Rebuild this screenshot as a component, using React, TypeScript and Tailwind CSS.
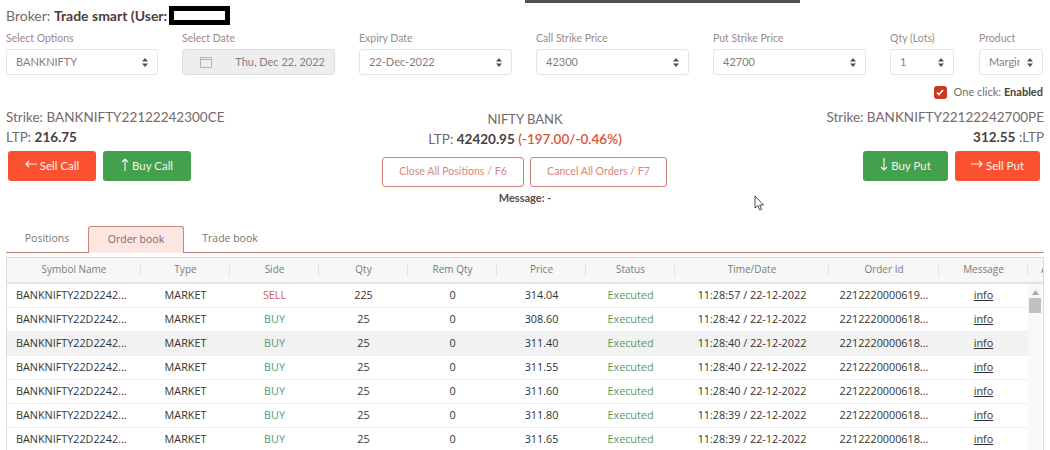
const font = { label: 'text-[10.5px] leading-[14px] text-[#9a8a8a]' };

const columns = [
  { name: 'Symbol Name', w: 'w-[134px]' },
  { name: 'Type', w: 'w-[89px]' },
  { name: 'Side', w: 'w-[89px]' },
  { name: 'Qty', w: 'w-[89px]' },
  { name: 'Rem Qty', w: 'w-[89px]' },
  { name: 'Price', w: 'w-[89px]' },
  { name: 'Status', w: 'w-[89px]' },
  { name: 'Time/Date', w: 'w-[154px]' },
  { name: 'Order Id', w: 'w-[110px]' },
  { name: 'Message', w: 'w-[89px]' },
];

const orders = [
  { side: 'SELL', qty: '225', price: '314.04', time: '11:28:57', id: '2212220000619...' },
  { side: 'BUY', qty: '25', price: '308.60', time: '11:28:42', id: '2212220000618...' },
  { side: 'BUY', qty: '25', price: '311.40', time: '11:28:40', id: '2212220000618...' },
  { side: 'BUY', qty: '25', price: '311.55', time: '11:28:40', id: '2212220000618...' },
  { side: 'BUY', qty: '25', price: '311.60', time: '11:28:40', id: '2212220000618...' },
  { side: 'BUY', qty: '25', price: '311.80', time: '11:28:39', id: '2212220000618...' },
  { side: 'BUY', qty: '25', price: '311.65', time: '11:28:39', id: '2212220000618...' },
];

function SortArrows() {
  return (
    <svg width="6" height="9" viewBox="0 0 6 9" className="shrink-0">
      <path d="M3 0 L6 3.6 H0 Z M0 5.4 H6 L3 9 Z" fill="#5a4a4a" />
    </svg>
  );
}

function Select({ label, value, w, ml = '' }: { label: string; value: string; w: string; ml?: string }) {
  return (
    <div className={`${w} ${ml} shrink-0`}>
      <div className={`${font.label} h-[18px]`}>{label}</div>
      <div className="flex h-[26px] items-center justify-between gap-[7px] overflow-hidden rounded-[3px] border border-[#e6e4e6] bg-white pl-[9px] pr-[9px] text-[11px] text-[#8d7b7b]">
        <span className="min-w-0 overflow-hidden whitespace-nowrap">{value}</span>
        <SortArrows />
      </div>
    </div>
  );
}

const arrows = {
  left: { w: 12, h: 8, d: 'M12 4H1M4 1L1 4L4 7' },
  right: { w: 12, h: 8, d: 'M0 4H11M8 1L11 4L8 7' },
  up: { w: 8, h: 13, d: 'M4 13V1M1 4L4 1L7 4' },
  down: { w: 8, h: 13, d: 'M4 0V12M1 9L4 12L7 9' },
};

function LongArrow({ dir }: { dir: 'left' | 'right' | 'up' | 'down' }) {
  const a = arrows[dir];
  return (
    <svg width={a.w} height={a.h} viewBox={`0 0 ${a.w} ${a.h}`} fill="none" stroke="#f4f4ee" strokeWidth="1.2" className="-mt-[4px] shrink-0">
      <path d={a.d} />
    </svg>
  );
}

function ActionButton({ label, bg, w, dir }: { label: string; bg: string; w: string; dir: 'left' | 'right' | 'up' | 'down' }) {
  return (
    <button className={`flex h-[30px] ${w} items-center justify-center gap-[3px] rounded-[3px] ${bg} text-[11.5px] text-[#f4f4ee]`}>
      <LongArrow dir={dir} />
      {label}
    </button>
  );
}

export default function App() {
  return (
    <div className="relative h-[450px] w-[1050px] overflow-hidden bg-white font-['Lato',sans-serif] text-[#756a6a]">
      <div className="absolute left-[525px] top-0 h-[3px] w-[275px] bg-[#50525a]" />

      <div className="flex h-[28px] items-center px-[6px] pt-[2px] text-[14px]">
        <span>Broker:&nbsp;</span>
        <span className="font-bold text-[#4d3d3d]">Trade smart (User:</span>
        <span className="ml-[2px] h-[19px] w-[61px] border-[5px] border-black bg-white" />
      </div>

      <div className="mt-[3px] flex gap-[24px] pl-[6px]">
        <Select label="Select Options" value="BANKNIFTY" w="w-[152px]" />
        <div className="w-[153px] shrink-0">
          <div className={`${font.label} h-[18px]`}>Select Date</div>
          <div className="flex h-[26px] items-center justify-between rounded-[3px] border border-[#dedde0] bg-[#eeeef0] pl-[17px] pr-[9px] text-[11px] text-[#8d7b7b]">
            <svg width="12" height="12" viewBox="0 0 12 12" fill="none" stroke="#b4b4b8" strokeWidth="1">
              <path d="M0.5 1.5H11.5V11.5H0.5ZM0.5 3.5H11.5" />
            </svg>
            <span>Thu, Dec 22, 2022</span>
          </div>
        </div>
        <Select label="Expiry Date" value="22-Dec-2022" w="w-[153px]" />
        <Select label="Call Strike Price" value="42300" w="w-[153px]" />
        <Select label="Put Strike Price" value="42700" w="w-[153px]" />
        <Select label="Qty (Lots)" value="1" w="w-[64px]" />
        <Select label="Product" value="Margin" w="w-[64px]" ml="ml-[1px]" />
      </div>

      <div className="mt-[9px] flex h-[16px] items-center justify-end gap-[7px] pr-[7px] text-[11px]">
        <span className="flex h-[13px] w-[13px] items-center justify-center rounded-[3px] bg-[#c9391f]">
          <svg width="8" height="7" viewBox="0 0 8 7" fill="none" stroke="white" strokeWidth="1.6">
            <path d="M1 3.5L3 5.5L7 1" />
          </svg>
        </span>
        <span>
          One click: <b className="text-[#4d3d3d]">Enabled</b>
        </span>
      </div>

      <div className="grid grid-cols-[1fr_auto_1fr] px-[6px]">
        <div>
          <div className="mt-[7px] h-[20px] text-[13.5px] leading-[20px]">Strike: BANKNIFTY22122242300CE</div>
          <div className="h-[21px] text-[13.5px] leading-[21px]">
            LTP: <b className="text-[#4d3d3d]">216.75</b>
          </div>
          <div className="mt-[3px] flex gap-[7px] pl-[2px]">
            <ActionButton label="Sell Call" bg="bg-[#fc5130]" w="w-[88px]" dir="left" />
            <ActionButton label="Buy Call" bg="bg-[#43a04d]" w="w-[88px]" dir="up" />
          </div>
        </div>

        <div className="flex flex-col items-center">
          <div className="mt-[9px] h-[20px] text-[13px] leading-[20px]">NIFTY BANK</div>
          <div className="h-[20px] whitespace-nowrap text-[13.5px] leading-[20px]">
            LTP: <b className="text-[#4d3d3d]">42420.95</b> <b className="font-semibold text-[#d9533a]">(-197.00/-0.46%)</b>
          </div>
          <div className="mr-[1px] mt-[8px] flex gap-[6px]">
            <button className="h-[30px] w-[142px] rounded-[3px] border border-[#d08276] text-[10.6px] text-[#d9867a]">Close All Positions / F6</button>
            <button className="h-[30px] w-[137px] rounded-[3px] border border-[#d08276] text-[10.6px] text-[#d9867a]">Cancel All Orders / F7</button>
          </div>
          <div className="mt-[3px] text-[11px] font-bold text-[#5a4c4c]">Message: -</div>
        </div>

        <div className="flex flex-col items-end">
          <div className="mt-[7px] h-[20px] text-[13.5px] leading-[20px]">Strike: BANKNIFTY22122242700PE</div>
          <div className="h-[21px] text-[13.5px] leading-[21px]">
            <b className="text-[#4d3d3d]">312.55</b> :LTP
          </div>
          <div className="mt-[3px] flex gap-[7px] pr-[4px]">
            <ActionButton label="Buy Put" bg="bg-[#43a04d]" w="w-[85px]" dir="down" />
            <ActionButton label="Sell Put" bg="bg-[#fc5130]" w="w-[85px]" dir="right" />
          </div>
        </div>
      </div>

      <svg width="12" height="17" viewBox="0 0 12 17" className="absolute left-[754px] top-[195px]">
        <path d="M1 1 V13 L3.8 10.6 L5.8 15 L7.6 14.2 L5.7 10 H9.5 Z" fill="white" stroke="#333" strokeWidth="0.9" />
      </svg>

      <div className="mx-[6px] mt-[19px] flex h-[27px] items-end border-b border-[#c8877c] font-['Open_Sans',sans-serif] text-[10.5px]">
        <div className="flex h-[26px] w-[82px] items-center justify-center text-[#7b7373]">Positions</div>
        <div className="-mb-px flex h-[27px] w-[96px] items-center justify-center rounded-t-[3px] border border-b-0 border-[#c8877c] bg-[#fde6e2] text-[#7b6868]">Order book</div>
        <div className="flex h-[26px] w-[92px] items-center justify-center text-[#7b7373]">Trade book</div>
      </div>

      <div className="mx-[6px] mt-[4px] border border-[#dcdcdc] font-['Open_Sans',sans-serif] text-[10.8px]">
        <div className="flex h-[26px] border-b-2 border-[#e2e2e2] bg-[#f7f7f7] text-[10px] text-[#7a7a7a]">
          {columns.map((c) => (
            <div key={c.name} className={`${c.w} relative flex shrink-0 items-center justify-center`}>
              {c.name}
              <span className="absolute right-0 top-[6px] h-[13px] w-px bg-[#e4e4e4]" />
            </div>
          ))}
          <div className="flex w-[15px] items-center overflow-hidden pl-[13px]">A</div>
        </div>
        <div className="flex">
          <div className="w-[1021px] shrink-0">
            {orders.map((o, i) => (
              <div key={i} className={`flex h-[24px] items-center border-b border-[#efefef] text-[#333] ${i === 2 ? 'bg-[#f2f2f2]' : 'bg-white'}`}>
                <div className="w-[134px] shrink-0 whitespace-nowrap pl-[9px]">BANKNIFTY22D2242...</div>
                <div className="w-[89px] shrink-0 text-center">MARKET</div>
                <div className={`w-[89px] shrink-0 text-center ${o.side === 'SELL' ? 'text-[#cf5f50]' : 'text-[#5a9a62]'}`}>{o.side}</div>
                <div className="w-[89px] shrink-0 text-center">{o.qty}</div>
                <div className="w-[89px] shrink-0 text-center">0</div>
                <div className="w-[89px] shrink-0 text-center">{o.price}</div>
                <div className="w-[89px] shrink-0 text-center text-[#5a9a62]">Executed</div>
                <div className="w-[154px] shrink-0 whitespace-nowrap text-center">{o.time} / 22-12-2022</div>
                <div className="w-[110px] shrink-0 whitespace-nowrap text-center">{o.id}</div>
                <div className="w-[89px] shrink-0 text-center underline">info</div>
              </div>
            ))}
          </div>
          <div className="flex w-[14px] flex-col items-center bg-[#f8f8f8]">
            <svg width="7" height="5" viewBox="0 0 7 5" className="mt-[6px]">
              <path d="M3.5 0 L7 5 H0 Z" fill="#a8a8a8" />
            </svg>
            <div className="mt-[3px] h-[15px] w-[12px] bg-[#c1c1c1]" />
          </div>
        </div>
      </div>
    </div>
  );
}
